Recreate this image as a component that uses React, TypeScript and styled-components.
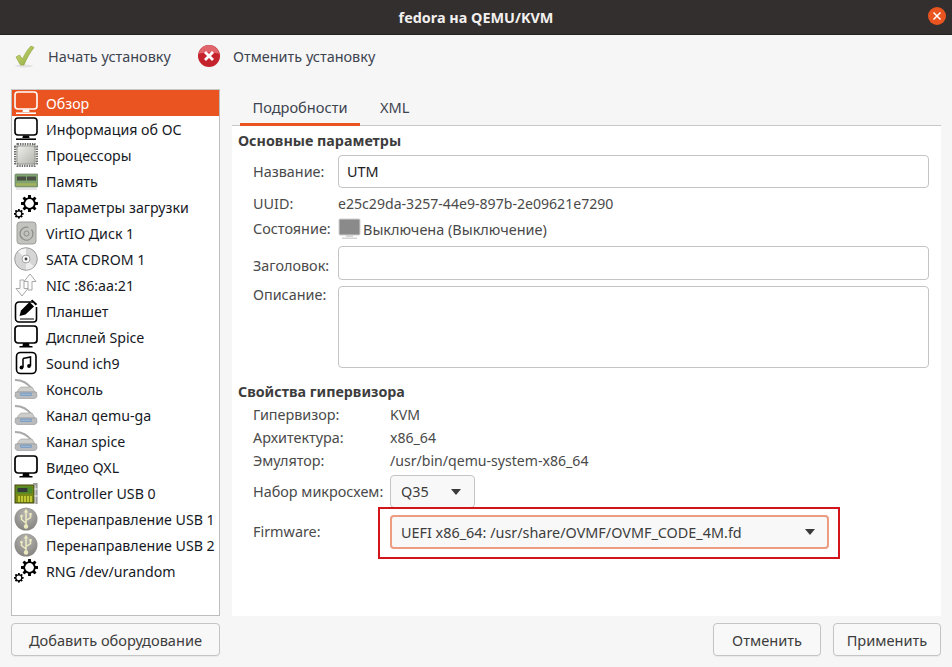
import React from "react";
import styled, { createGlobalStyle } from "styled-components";

const GlobalStyle = createGlobalStyle`
  html, body { margin: 0; padding: 0; background: #f6f6f6; }
  body { font-family: "Noto Sans", "Open Sans", sans-serif; font-size: 14px; color: #3d3d3d; }
  * { box-sizing: border-box; }
`;

const Win = styled.div`
  width: 952px;
  height: 667px;
  display: flex;
  flex-direction: column;
  overflow: hidden;
  background: #f6f6f6;
`;

const TitleBar = styled.header`
  height: 35px;
  flex: none;
  background: #332f2f;
  border-bottom: 1px solid #242121;
  display: flex;
  align-items: center;
  justify-content: center;
  position: relative;
  color: #f2f0ee;
  font-weight: 700;
  font-size: 14.4px;
`;

const CloseBtn = styled.span`
  position: absolute;
  right: 6px;
  top: 7px;
  width: 18px;
  height: 18px;
  border-radius: 50%;
  background: #e95420;
  display: flex;
  align-items: center;
  justify-content: center;
`;

const Toolbar = styled.div`
  height: 54px;
  flex: none;
  display: flex;
  align-items: center;
  padding: 0 0 12px 12px;
`;

const ToolItem = styled.div<{ $w: number }>`
  width: ${(p) => p.$w}px;
  display: flex;
  align-items: center;
  gap: 12px;
  font-size: 14.45px;
  color: #3d4450;
`;

const Body = styled.div`
  flex: 1;
  display: flex;
  padding: 0 11px;
  gap: 12px;
  min-height: 0;
`;

const Side = styled.div`
  width: 209px;
  flex: none;
  display: flex;
  flex-direction: column;
`;

const DeviceList = styled.ul`
  margin: 0;
  padding: 0;
  list-style: none;
  height: 527px;
  background: #fff;
  border: 1px solid #bdbdbd;
  border-top-color: #c8c8c8;
`;

const DeviceRow = styled.li<{ $on?: boolean }>`
  height: 26px;
  display: flex;
  align-items: center;
  gap: 8px;
  padding-left: 2px;
  white-space: nowrap;
  font-size: 14.2px;
  background: ${(p) => (p.$on ? "#e95420" : "transparent")};
  color: ${(p) => (p.$on ? "#fff" : "#16191f")};
`;

const IconSlot = styled.span`
  width: 24px;
  height: 24px;
  flex: none;
  display: block;
  svg { display: block; }
`;

const BaseButton = styled.div`
  height: 33px;
  display: flex;
  align-items: center;
  justify-content: center;
  border: 1px solid #c4c4c4;
  border-radius: 4px;
  background: #f8f8f8;
  font-size: 14.6px;
  color: #3d3d3d;
  box-shadow: 0 1px 1px rgba(0, 0, 0, 0.05);
`;

const AddButton = styled(BaseButton)`
  margin-top: 7px;
`;

const Main = styled.div`
  flex: 1;
  display: flex;
  flex-direction: column;
  min-width: 0;
`;

const Tabs = styled.div`
  height: 37px;
  flex: none;
  display: flex;
  padding-left: 8px;
  border-bottom: 1px solid #c8c8c8;
`;

const Tab = styled.div<{ $on?: boolean }>`
  height: 37px;
  padding: 1px 12px 0;
  width: ${(p) => (p.$on ? "120px" : "auto")};
  display: flex;
  align-items: center;
  justify-content: center;
  font-size: 14.6px;
  color: #3d4450;
  border-bottom: 3px solid ${(p) => (p.$on ? "#e95420" : "transparent")};
  margin-right: 8px;
`;

const Content = styled.div`
  height: 490px;
  flex: none;
  background: #fff;
  padding: 6px 0 0 6px;
  position: relative;
`;

const SectionTitle = styled.h3<{ $top?: number }>`
  margin: ${(p) => p.$top ?? 0}px 0 0;
  height: 18px;
  line-height: 18px;
  font-size: 14.3px;
  font-weight: 700;
  color: #3d3d3d;
`;

const Grid = styled.div<{ $label: number; $top: number }>`
  display: grid;
  grid-template-columns: ${(p) => p.$label}px 1fr;
  padding-left: 15px;
  margin-top: ${(p) => p.$top}px;
  align-items: center;
`;

const Label = styled.div<{ $alignTop?: boolean }>`
  font-size: 14.4px;
  line-height: 18px;
  color: #4a4a4a;
  white-space: nowrap;
  align-self: ${(p) => (p.$alignTop ? "start" : "center")};
`;

const Value = styled.div<{ $h: number }>`
  height: ${(p) => p.$h}px;
  display: flex;
  align-items: center;
  gap: 1px;
  font-size: 14.1px;
  color: #4a4a4a;
  white-space: nowrap;
`;

const StatusText = styled.span`
  font-size: 14.45px;
`;

const TextInput = styled.div<{ $h: number; $bottom?: number }>`
  height: ${(p) => p.$h}px;
  margin-right: 12px;
  margin-bottom: ${(p) => p.$bottom ?? 0}px;
  border: 1px solid #c4c4c4;
  border-radius: 4px;
  background: #fff;
  display: flex;
  align-items: center;
  padding-left: 8px;
  font-size: 14.4px;
  color: #1c1c1c;
`;

const Combo = styled.div<{ $w: number; $focus?: boolean }>`
  width: ${(p) => p.$w}px;
  height: ${(p) => (p.$focus ? 34 : 33)}px;
  border: ${(p) => (p.$focus ? "2px solid #eb9c81" : "1px solid #c4c4c4")};
  border-radius: 4px;
  background: #f8f8f8;
  display: flex;
  align-items: center;
  justify-content: space-between;
  padding: 0 ${(p) => (p.$focus ? "12px" : "13px")} 0 ${(p) => (p.$focus ? "9px" : "10px")};
  font-size: 14.4px;
  color: #3d3d3d;
`;

const Arrow = styled.span`
  width: 0;
  height: 0;
  border-left: 5.5px solid transparent;
  border-right: 5.5px solid transparent;
  border-top: 6px solid #3a3a3a;
`;

const Highlight = styled.div`
  position: absolute;
  left: 146px;
  top: 381px;
  width: 462px;
  height: 52px;
  border: 2px solid #d3141b;
  pointer-events: none;
`;

const Footer = styled.div`
  height: 51px;
  flex: none;
  display: flex;
  justify-content: flex-end;
  gap: 12px;
  padding-top: 7px;
`;

const FooterButton = styled(BaseButton)<{ $w: number }>`
  width: ${(p) => p.$w}px;
`;

const Monitor = ({ c = "#000", fill = "none" }: { c?: string; fill?: string }) => (
  <svg width="24" height="24" viewBox="0 0 24 24">
    <rect x="1" y="1" width="22" height="17" rx="3" fill={fill} stroke={c} strokeWidth="1.6" />
    <path d="M9 18.500h6l.6 2.500H8.400z" fill={c} />
    <rect x="2" y="21.400" width="20" height="1.600" fill={c} />
  </svg>
);

const Screen = () => (
  <svg width="24" height="24" viewBox="0 0 24 24">
    <rect x="1" y="1" width="22" height="17" rx="3" fill="none" stroke="#000" strokeWidth="1.7" />
    <path d="M9 18h6l.5 3h3v1.600h-13V21h3z" fill="#000" />
  </svg>
);

const Chip = () => (
  <svg width="24" height="24" viewBox="0 0 24 24">
    <defs>
      <linearGradient id="chipFace" x1="0" y1="0" x2="1" y2="1">
        <stop offset="0" stopColor="#f0f0ec" />
        <stop offset="1" stopColor="#b4b4ae" />
      </linearGradient>
    </defs>
    <rect x="1" y="3.500" width="22" height="17" fill="none" stroke="#6f6f6c" strokeWidth="2" strokeDasharray="1.4 1" />
    <rect x="3.500" y="1" width="17" height="22" fill="none" stroke="#6f6f6c" strokeWidth="2" strokeDasharray="1.4 1" />
    <rect x="3" y="3" width="18" height="18" rx="2" fill="url(#chipFace)" stroke="#8a8a86" strokeWidth="0.8" />
  </svg>
);

const Ram = () => (
  <svg width="24" height="24" viewBox="0 0 24 24">
    <rect x="1" y="5" width="23" height="13" rx="1" fill="#7fa36f" stroke="#6f7d6f" strokeWidth="0.7" />
    <rect x="3" y="7.500" width="9" height="4" fill="#4a4f45" />
    <rect x="13" y="7.500" width="9" height="4" fill="#4a4f45" />
    <path d="M2.500 15.500h20" stroke="#c9c14f" strokeWidth="2.500" strokeDasharray="1 1" />
    <path d="M2 20h21" stroke="#dcdcdc" strokeWidth="1.500" />
  </svg>
);

const gearTeeth = [0, 45, 90, 135, 180, 225, 270, 315];

const Gears = () => (
  <svg width="24" height="24" viewBox="0 0 24 24">
    <g transform="translate(15.500 8.500)">
      {gearTeeth.map((a) => (
        <rect key={a} x="-1.300" y="-8.400" width="2.600" height="16.800" fill="#000" transform={`rotate(${a})`} />
      ))}
      <circle r="6.200" fill="#000" />
      <circle r="4.400" fill="#fff" />
    </g>
    <g transform="translate(4.800 18.800)">
      {gearTeeth.map((a) => (
        <rect key={a} x="-0.800" y="-4.600" width="1.600" height="9.200" fill="#000" transform={`rotate(${a})`} />
      ))}
      <circle r="3.600" fill="#000" />
      <circle r="2.400" fill="#fff" />
    </g>
  </svg>
);

const Disk = () => (
  <svg width="24" height="24" viewBox="0 0 24 24">
    <rect x="3" y="1" width="19" height="22" rx="3" fill="#c2c2bf" stroke="#9e9e9b" />
    <path d="M17.500 8.500a6.500 6.500 0 1 1-3-2" fill="none" stroke="#8d8d8a" strokeWidth="1.2" />
    <circle cx="12.500" cy="12.500" r="2.500" fill="none" stroke="#8d8d8a" />
  </svg>
);

const Cdrom = () => (
  <svg width="24" height="24" viewBox="0 0 24 24">
    <circle cx="12" cy="12" r="11.300" fill="#d6d6d6" stroke="#9c9c9c" />
    <path d="M12 12L4 4.500a11 11 0 0 1 8-3z" fill="#f4f4f4" />
    <path d="M12 12l8 7.500a11 11 0 0 1-8 3z" fill="#ededed" />
    <circle cx="12" cy="12" r="4" fill="#fafafa" stroke="#a5a5a5" />
    <circle cx="12" cy="12" r="1.400" fill="#444" />
  </svg>
);

const NicArrows = () => (
  <svg width="24" height="24" viewBox="0 0 24 24" fill="#fbfbfb" stroke="#a8a8a8" strokeWidth="1">
    <path d="M16 1l6 7.500h-4V17h-4V8.500h-4z" />
    <path d="M8 23l-6-7.500h4V7h4v8.500h4z" />
  </svg>
);

const Tablet = () => (
  <svg width="24" height="24" viewBox="0 0 24 24">
    <path d="M19 3H5a3.500 3.500 0 0 0-3.500 3.500v13A3.500 3.500 0 0 0 5 23h14.500a3 3 0 0 0 3-3V8" fill="none" stroke="#000" strokeWidth="1.6" />
    <path d="M5.500 17l1.500-5.500L15.500 3l4.500 4.500-8.500 8z" fill="#000" />
    <path d="M17 1.500l1.200-1 5 4.500-1.500 1.500z" fill="#000" />
    <path d="M6 20h14" stroke="#000" strokeWidth="1" />
  </svg>
);

const Sound = () => (
  <svg width="24" height="24" viewBox="0 0 24 24">
    <rect x="2.500" y="1.500" width="19.500" height="21" rx="4" fill="none" stroke="#000" strokeWidth="1.6" />
    <path d="M9 7.500l7.500-1.500v9" fill="none" stroke="#000" strokeWidth="1.5" />
    <path d="M9 7.500v9" stroke="#000" strokeWidth="1.5" />
    <circle cx="7.500" cy="16.500" r="1.900" fill="#000" />
    <circle cx="15" cy="15" r="1.900" fill="#000" />
  </svg>
);

const Serial = () => (
  <svg width="24" height="24" viewBox="0 0 24 24">
    <path d="M1 3c7 0 12 2 17 9" fill="none" stroke="#a8a8a8" strokeWidth="1.800" />
    <path d="M7 10c-2 1-3 3-4 5h18l-3-5z" fill="#cdcdcb" stroke="#9a9a98" strokeWidth="0.6" />
    <path d="M1.500 15h21l.5 4c-.5 2-2 2.500-3 2.500H4c-1 0-2.500-.5-3-2.500z" fill="#b9bbbd" stroke="#8f9296" strokeWidth="0.6" />
    <rect x="6" y="15.500" width="12" height="3.500" rx="1.500" fill="#7f9fc4" />
    <path d="M7.500 17.300h9" stroke="#dfe8f2" strokeWidth="0.8" strokeDasharray="1 1" />
  </svg>
);

const PciCard = () => (
  <svg width="24" height="24" viewBox="0 0 24 24">
    <rect x="1" y="4" width="19" height="18" fill="#7b8a16" stroke="#3f4610" strokeWidth="1" />
    <rect x="2.500" y="5.500" width="16" height="7" fill="#4f8a2a" />
    <rect x="3.500" y="7" width="10" height="4" rx="1" fill="#35393a" />
    <path d="M5 15v6M8 15v6M11 15v6M14 15v6M17 15v6" stroke="#d8dc3c" strokeWidth="1.5" />
    <path d="M19 3h3.500v20" fill="none" stroke="#9a9a9a" strokeWidth="2.200" />
    <path d="M20.500 8h3M20.500 15h3" stroke="#e2e2e2" strokeWidth="1.500" />
  </svg>
);

const UsbDisc = ({ id }: { id: string }) => (
  <svg width="24" height="24" viewBox="0 0 24 24">
    <defs>
      <radialGradient id={id} cx="0.500" cy="0.300" r="0.800">
        <stop offset="0" stopColor="#b8b7b3" />
        <stop offset="1" stopColor="#7d7c78" />
      </radialGradient>
    </defs>
    <circle cx="12" cy="12" r="11.500" fill={`url(#${id})`} />
    <path d="M12 4v14M12 16l-4.500-3.500V9.500M12 13.500l4.500-3V8" fill="none" stroke="#ecebc0" strokeWidth="1.500" />
    <circle cx="12" cy="19.500" r="2.200" fill="#ecebc0" />
    <path d="M9.800 5.500h4.400L12 1.800z" fill="#ecebc0" />
    <circle cx="7.500" cy="9" r="1.300" fill="#ecebc0" />
    <rect x="15.300" y="6" width="2.400" height="2.400" fill="#ecebc0" />
  </svg>
);

const devices: { label: string; icon: React.ReactNode }[] = [
  { label: "Обзор", icon: <Monitor c="#fff" fill="#e95420" /> },
  { label: "Информация об ОС", icon: <Monitor /> },
  { label: "Процессоры", icon: <Chip /> },
  { label: "Память", icon: <Ram /> },
  { label: "Параметры загрузки", icon: <Gears /> },
  { label: "VirtIO Диск 1", icon: <Disk /> },
  { label: "SATA CDROM 1", icon: <Cdrom /> },
  { label: "NIC :86:aa:21", icon: <NicArrows /> },
  { label: "Планшет", icon: <Tablet /> },
  { label: "Дисплей Spice", icon: <Screen /> },
  { label: "Sound ich9", icon: <Sound /> },
  { label: "Консоль", icon: <Serial /> },
  { label: "Канал qemu-ga", icon: <Serial /> },
  { label: "Канал spice", icon: <Serial /> },
  { label: "Видео QXL", icon: <Screen /> },
  { label: "Controller USB 0", icon: <PciCard /> },
  { label: "Перенаправление USB 1", icon: <UsbDisc id="usbA" /> },
  { label: "Перенаправление USB 2", icon: <UsbDisc id="usbB" /> },
  { label: "RNG /dev/urandom", icon: <Gears /> },
];

export default function App() {
  return (
    <Win>
      <GlobalStyle />
      <TitleBar>
        fedora на QEMU/KVM
        <CloseBtn>
          <svg width="10" height="10" viewBox="0 0 10 10">
            <path d="M1.500 1.500l7 7M8.500 1.500l-7 7" stroke="#fff" strokeWidth="1.5" />
          </svg>
        </CloseBtn>
      </TitleBar>
      <Toolbar>
        <ToolItem $w={185}>
          <svg width="24" height="24" viewBox="0 0 24 24">
            <defs>
              <linearGradient id="okTick" x1="0" y1="0" x2="1" y2="1">
                <stop offset="0" stopColor="#d6dd7c" />
                <stop offset="1" stopColor="#86a83a" />
              </linearGradient>
            </defs>
            <ellipse cx="12" cy="22" rx="9" ry="1.500" fill="#e2e2e2" />
            <path d="M4 13l3.500-2 3 4C13 9.500 15.500 5.500 19 2l3 1.500c-4 5-7.500 11-10 17.500H8.500z" fill="url(#okTick)" stroke="#93a845" strokeWidth="0.7" />
          </svg>
          Начать установку
        </ToolItem>
        <ToolItem $w={200}>
          <svg width="24" height="24" viewBox="0 0 24 24">
            <circle cx="12" cy="12" r="11" fill="#c4232d" />
            <path d="M2 10a10 9 0 0 1 20 0c-4-2-16-2-20 0z" fill="#e0656c" />
            <path d="M8 8l8 8M16 8l-8 8" stroke="#fff" strokeWidth="2.800" />
          </svg>
          Отменить установку
        </ToolItem>
      </Toolbar>
      <Body>
        <Side>
          <DeviceList>
            {devices.map((d, i) => (
              <DeviceRow key={d.label} $on={i === 0}>
                <IconSlot>{d.icon}</IconSlot>
                {d.label}
              </DeviceRow>
            ))}
          </DeviceList>
          <AddButton>Добавить оборудование</AddButton>
        </Side>
        <Main>
          <Tabs>
            <Tab $on>Подробности</Tab>
            <Tab>XML</Tab>
          </Tabs>
          <Content>
            <SectionTitle>Основные параметры</SectionTitle>
            <Grid $label={85} $top={5}>
              <Label>Название:</Label>
              <TextInput $h={33}>UTM</TextInput>
              <Label>UUID:</Label>
              <Value $h={31}>e25c29da-3257-44e9-897b-2e09621e7290</Value>
              <Label>Состояние:</Label>
              <Value $h={20}>
                <svg width="24" height="24" viewBox="0 0 24 24">
                  <rect x="1" y="2" width="21" height="16" rx="1" fill="#8a8a8a" stroke="#d0d0d0" />
                  <path d="M8 18h7v2H8zM4 20.500h15v1.500H4z" fill="#d5d5d5" />
                </svg>
                <StatusText>Выключена (Выключение)</StatusText>
              </Value>
            </Grid>
            <Grid $label={85} $top={7}>
              <Label>Заголовок:</Label>
              <TextInput $h={34} $bottom={6} />
              <Label $alignTop>Описание:</Label>
              <TextInput $h={82} />
            </Grid>
            <SectionTitle $top={15}>Свойства гипервизора</SectionTitle>
            <Grid $label={137} $top={2}>
              <Label>Гипервизор:</Label>
              <Value $h={23}>KVM</Value>
              <Label>Архитектура:</Label>
              <Value $h={23}>x86_64</Value>
              <Label>Эмулятор:</Label>
              <Value $h={23}>/usr/bin/qemu-system-x86_64</Value>
            </Grid>
            <Grid $label={137} $top={3}>
              <Label>Набор микросхем:</Label>
              <Combo $w={85}>
                Q35
                <Arrow />
              </Combo>
            </Grid>
            <Grid $label={137} $top={7}>
              <Label>Firmware:</Label>
              <Combo $w={439} $focus>
                UEFI x86_64: /usr/share/OVMF/OVMF_CODE_4M.fd
                <Arrow />
              </Combo>
            </Grid>
            <Highlight />
          </Content>
          <Footer>
            <FooterButton $w={108}>Отменить</FooterButton>
            <FooterButton $w={108}>Применить</FooterButton>
          </Footer>
        </Main>
      </Body>
    </Win>
  );
}
